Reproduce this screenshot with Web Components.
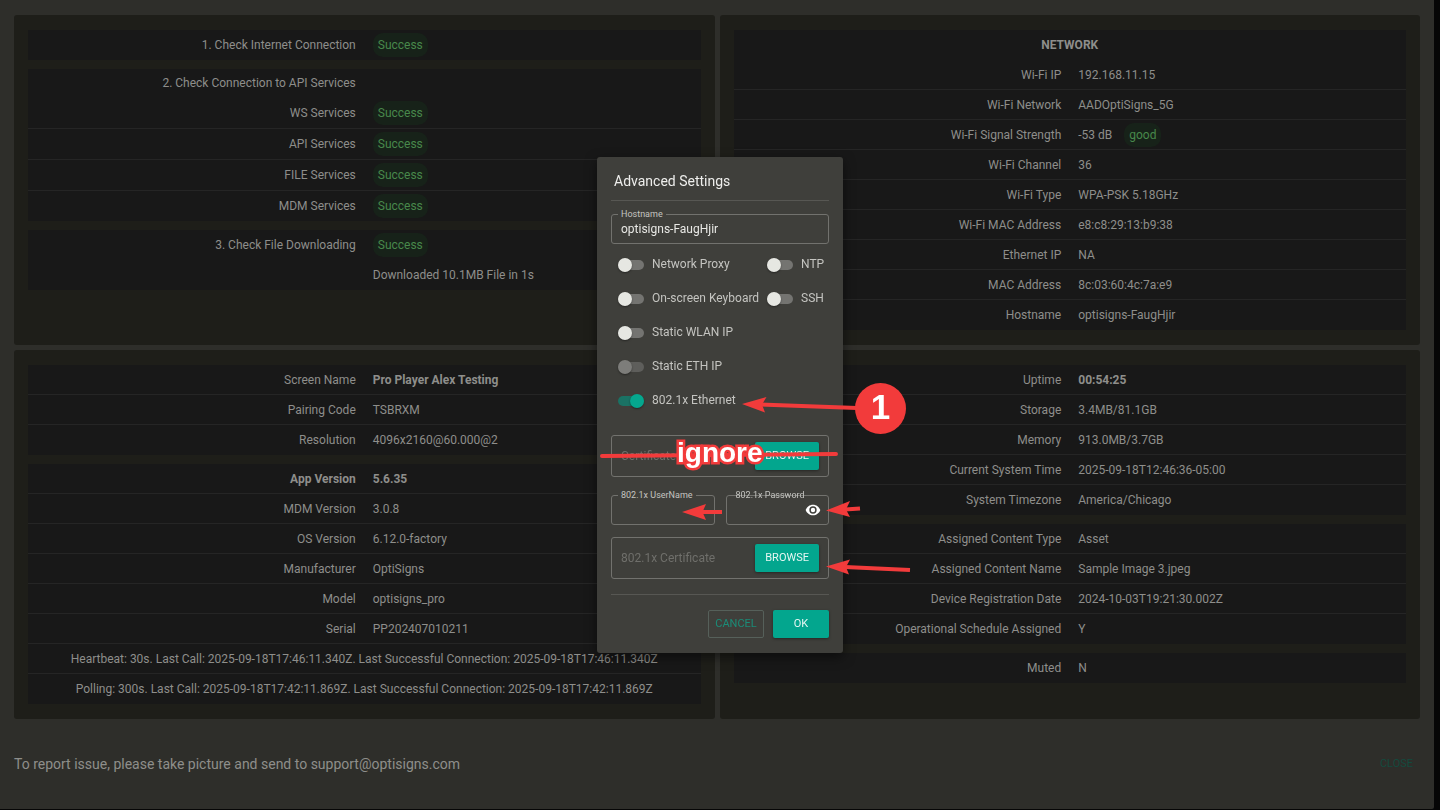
<!DOCTYPE html>
<html lang="en">
<head>
<meta charset="utf-8">
<title>Device status</title>
<style>
  body {
    margin: 0;
    background: #060606;
    color: #8e8e8b;
    font: 12px/16px Roboto, "Liberation Sans", sans-serif;
  }
</style>
</head>
<body>

<status-page>
  <info-panel>
    <info-group>
      <info-row label="1. Check Internet Connection"><status-pill>Success</status-pill></info-row>
    </info-group>
    <info-group>
      <info-row class="head" label="2. Check Connection to API Services"></info-row>
      <info-row class="service" label="WS Services"><status-pill>Success</status-pill></info-row>
      <info-row class="service" label="API Services"><status-pill>Success</status-pill></info-row>
      <info-row class="service" label="FILE Services"><status-pill>Success</status-pill></info-row>
      <info-row label="MDM Services"><status-pill>Success</status-pill></info-row>
    </info-group>
    <info-group>
      <info-row class="plain" label="3. Check File Downloading"><status-pill>Success</status-pill></info-row>
      <info-row>Downloaded 10.1MB File in 1s</info-row>
    </info-group>
  </info-panel>

  <info-panel>
    <info-group>
      <info-note class="title">NETWORK</info-note>
      <info-row label="Wi-Fi IP">192.168.11.15</info-row>
      <info-row label="Wi-Fi Network">AADOptiSigns_5G</info-row>
      <info-row label="Wi-Fi Signal Strength"><span>-53 dB</span><status-pill>good</status-pill></info-row>
      <info-row label="Wi-Fi Channel">36</info-row>
      <info-row label="Wi-Fi Type">WPA-PSK 5.18GHz</info-row>
      <info-row label="Wi-Fi MAC Address">e8:c8:29:13:b9:38</info-row>
      <info-row label="Ethernet IP">NA</info-row>
      <info-row label="MAC Address">8c:03:60:4c:7a:e9</info-row>
      <info-row label="Hostname">optisigns-FaugHjir</info-row>
    </info-group>
  </info-panel>

  <info-panel>
    <info-group>
      <info-row label="Screen Name"><b>Pro Player Alex Testing</b></info-row>
      <info-row label="Pairing Code">TSBRXM</info-row>
      <info-row label="Resolution">4096x2160@60.000@2</info-row>
    </info-group>
    <info-group>
      <info-row class="strong" label="App Version">5.6.35</info-row>
      <info-row label="MDM Version">3.0.8</info-row>
      <info-row label="OS Version">6.12.0-factory</info-row>
      <info-row label="Manufacturer">OptiSigns</info-row>
      <info-row label="Model">optisigns_pro</info-row>
      <info-row label="Serial">PP202407010211</info-row>
      <info-note>Heartbeat: 30s. Last Call: 2025-09-18T17:46:11.340Z. Last Successful Connection: 2025-09-18T17:46:11.340Z</info-note>
      <info-note>Polling: 300s. Last Call: 2025-09-18T17:42:11.869Z. Last Successful Connection: 2025-09-18T17:42:11.869Z</info-note>
    </info-group>
  </info-panel>

  <info-panel>
    <info-group>
      <info-row label="Uptime"><b>00:54:25</b></info-row>
      <info-row label="Storage">3.4MB/81.1GB</info-row>
      <info-row label="Memory">913.0MB/3.7GB</info-row>
      <info-row label="Current System Time">2025-09-18T12:46:36-05:00</info-row>
      <info-row label="System Timezone">America/Chicago</info-row>
    </info-group>
    <info-group>
      <info-row label="Assigned Content Type">Asset</info-row>
      <info-row label="Assigned Content Name">Sample Image 3.jpeg</info-row>
      <info-row label="Device Registration Date">2024-10-03T19:21:30.002Z</info-row>
      <info-row label="Operational Schedule Assigned">Y</info-row>
    </info-group>
    <info-group>
      <info-row label="Muted">N</info-row>
    </info-group>
  </info-panel>

  <span slot="footer">To report issue, please take picture and send to support@optisigns.com</span>
</status-page>

<settings-dialog heading="Advanced Settings">
  <text-field label="Hostname" value="optisigns-FaugHjir"></text-field>
  <switch-grid>
    <toggle-switch label="Network Proxy"></toggle-switch>
    <toggle-switch label="NTP"></toggle-switch>
    <toggle-switch label="On-screen Keyboard"></toggle-switch>
    <toggle-switch label="SSH"></toggle-switch>
    <toggle-switch class="wide" label="Static WLAN IP"></toggle-switch>
    <toggle-switch class="wide" label="Static ETH IP" disabled></toggle-switch>
    <toggle-switch class="wide" label="802.1x Ethernet" checked></toggle-switch>
  </switch-grid>
  <file-field label="Certificate"></file-field>
  <field-pair>
    <text-field label="802.1x UserName"></text-field>
    <text-field label="802.1x Password" type="password"></text-field>
  </field-pair>
  <file-field label="802.1x Certificate"></file-field>
  <md-button slot="actions" kind="outlined">CANCEL</md-button>
  <md-button slot="actions">OK</md-button>
  <callout-marks slot="marks"></callout-marks>
</settings-dialog>

<script>
// attaches an open shadow root with the given markup
function render(el, html) {
  el.attachShadow({ mode: 'open' });
  el.shadowRoot.innerHTML = html;
  return el.shadowRoot;
}

class StatusPage extends HTMLElement {
  constructor() {
    super();
    render(this, `
      <style>
        :host {
          display: flex;
          flex-direction: column;
          box-sizing: border-box;
          min-height: calc(100vh - 1px);
          margin-right: 6px;
          padding: 15px 14px 0;
          background: #2e2e2a;
          border-radius: 0 0 2px 0;
        }
        main {
          display: grid;
          grid-template-columns: 1fr 1fr;
          gap: 5px;
        }
        footer {
          display: flex;
          flex: 1;
          align-items: center;
          justify-content: space-between;
          font-size: 14px;
        }
        md-button { margin-right: 7px; }
      </style>
      <main><slot></slot></main>
      <footer>
        <slot name="footer"></slot>
        <md-button kind="faint">CLOSE</md-button>
      </footer>
    `);
  }
}

class InfoPanel extends HTMLElement {
  constructor() {
    super();
    render(this, `
      <style>
        :host {
          display: flex;
          flex-direction: column;
          gap: 9px;
          min-width: 0;
          padding: 15px 14px;
          background: #1e1e19;
          border-radius: 3px;
        }
      </style>
      <slot></slot>
    `);
  }
}

class InfoGroup extends HTMLElement {
  constructor() {
    super();
    render(this, `
      <style>
        :host { display: block; background: #181818; }
        ::slotted(*) { border-bottom: 1px solid #252525; }
        ::slotted(.head), ::slotted(.title), ::slotted(.plain), ::slotted(:last-child) {
          border-bottom-color: transparent;
        }
      </style>
      <slot></slot>
    `);
  }
}

class InfoRow extends HTMLElement {
  constructor() {
    super();
    const root = render(this, `
      <style>
        :host {
          display: grid;
          grid-template-columns: 1fr 1fr;
          gap: 17px;
          align-items: center;
          box-sizing: border-box;
          height: 30px;
        }
        :host(.service) { height: 31px; }
        :host(.head) { height: 29px; }
        :host(.strong) { font-weight: bold; }
        .label { text-align: right; }
        .value { display: flex; align-items: center; gap: 12px; }
      </style>
      <div class="label"></div>
      <div class="value"><slot></slot></div>
    `);
    root.querySelector('.label').textContent = this.getAttribute('label') || '';
  }
}

class InfoNote extends HTMLElement {
  constructor() {
    super();
    render(this, `
      <style>
        :host {
          display: flex;
          align-items: center;
          justify-content: center;
          box-sizing: border-box;
          height: 30px;
          white-space: nowrap;
        }
        :host(.title) { font-weight: bold; }
      </style>
      <slot></slot>
    `);
  }
}

class StatusPill extends HTMLElement {
  constructor() {
    super();
    render(this, `
      <style>
        :host {
          display: block;
          padding: 4px 5px;
          border-radius: 10px;
          background: #172219;
          color: #48884b;
        }
      </style>
      <slot></slot>
    `);
  }
}

class MdButton extends HTMLElement {
  constructor() {
    super();
    render(this, `
      <style>
        :host { display: block; }
        button {
          box-sizing: border-box;
          width: 100%;
          min-width: 56px;
          height: 28px;
          padding: 0 10px;
          border: 0;
          border-radius: 2px;
          background: #03a68e;
          color: #e4f6f2;
          font: 11px/16px Roboto, "Liberation Sans", sans-serif;
          box-shadow: 0 1px 3px rgba(0, 0, 0, .4);
        }
        :host([kind=outlined]) button {
          padding: 0 6px;
          border: 1px solid #56605a;
          background: none;
          color: #1b8c78;
          box-shadow: none;
        }
        :host([kind=faint]) button {
          min-width: 0;
          padding: 0;
          background: none;
          color: #144a3e;
          box-shadow: none;
        }
      </style>
      <button type="button"><slot></slot></button>
    `);
  }
}

class SettingsDialog extends HTMLElement {
  constructor() {
    super();
    const root = render(this, `
      <style>
        :host {
          position: fixed;
          inset: 0;
          display: grid;
          place-items: center;
        }
        section {
          position: relative;
          box-sizing: border-box;
          width: 246px;
          padding: 0 14px 15px;
          border-radius: 3px;
          background: #3f3f3b;
          box-shadow: 0 4px 12px rgba(0, 0, 0, .5);
          color: #c4c4c0;
        }
        h1 {
          margin: 0;
          padding: 14px 3px 9px;
          border-bottom: 1px solid #575753;
          color: #eeeeec;
          font-size: 14px;
          line-height: 20px;
          font-weight: normal;
        }
        .body {
          display: flex;
          flex-direction: column;
          padding: 13px 0 15px;
        }
        .actions {
          display: flex;
          justify-content: flex-end;
          gap: 9px;
          padding-top: 15px;
          border-top: 1px solid #575753;
        }
      </style>
      <section role="dialog" aria-labelledby="heading">
        <h1 id="heading"></h1>
        <div class="body"><slot></slot></div>
        <div class="actions"><slot name="actions"></slot></div>
        <slot name="marks"></slot>
      </section>
    `);
    root.querySelector('h1').textContent = this.getAttribute('heading');
  }
}

class TextField extends HTMLElement {
  constructor() {
    super();
    const password = this.getAttribute('type') === 'password';
    const root = render(this, `
      <style>
        :host {
          position: relative;
          display: flex;
          align-items: center;
          box-sizing: border-box;
          min-width: 0;
          height: 30px;
          padding: 0 7px 0 9px;
          border: 1px solid #72726e;
          border-radius: 3px;
        }
        label {
          position: absolute;
          top: -6px;
          left: 6px;
          padding: 0 3px;
          background: #3f3f3b;
          font-size: 9px;
          line-height: 10px;
          white-space: nowrap;
        }
        :host([type=password]) label { background: none; }
        input {
          flex: 1;
          min-width: 0;
          padding: 0;
          border: 0;
          outline: 0;
          background: none;
          color: #e8e8e5;
          font: inherit;
        }
        button {
          display: flex;
          padding: 0;
          border: 0;
          background: none;
        }
      </style>
      <label for="field"></label>
      <input id="field" autocomplete="off">
      ${password ? `
        <button type="button" aria-label="Show password">
          <svg width="16" height="16" viewBox="0 0 24 24" fill="#fff">
            <path d="M12 4C7 4 2.700 7.300 1 12c1.700 4.700 6 8 11 8s9.300-3.300 11-8c-1.700-4.700-6-8-11-8zm0 13.500a5.500 5.500 0 1 1 0-11 5.500 5.500 0 0 1 0 11zm0-8.800a3.300 3.300 0 1 0 0 6.600 3.300 3.300 0 0 0 0-6.600z"/>
          </svg>
        </button>` : ''}
    `);
    const input = root.querySelector('input');
    input.type = password ? 'password' : 'text';
    input.value = this.getAttribute('value') || '';
    root.querySelector('label').textContent = this.getAttribute('label');
  }
}

class FieldPair extends HTMLElement {
  constructor() {
    super();
    render(this, `
      <style>
        :host {
          display: grid;
          grid-template-columns: 1fr 1fr;
          gap: 11px;
          margin: 18px 0 12px;
        }
      </style>
      <slot></slot>
    `);
  }
}

class SwitchGrid extends HTMLElement {
  constructor() {
    super();
    render(this, `
      <style>
        :host {
          display: grid;
          grid-template-columns: 149px 1fr;
          grid-auto-rows: 34px;
          align-items: center;
          margin: 3px 0 18px;
          padding-left: 7px;
        }
        ::slotted(.wide) { grid-column: 1 / -1; }
      </style>
      <slot></slot>
    `);
  }
}

class ToggleSwitch extends HTMLElement {
  constructor() {
    super();
    const root = render(this, `
      <style>
        :host { display: block; }
        label {
          display: flex;
          align-items: center;
          gap: 8px;
          white-space: nowrap;
        }
        input {
          appearance: none;
          display: flex;
          align-items: center;
          width: 26px;
          height: 10px;
          margin: 1px 0 0;
          border-radius: 5px;
          background: #747471;
        }
        input::before {
          content: "";
          width: 14px;
          height: 14px;
          flex: none;
          border-radius: 50%;
          background: #e6e7e2;
          box-shadow: 0 1px 2px rgba(0, 0, 0, .4);
        }
        input:disabled { background: #5e5e5b; }
        input:disabled::before { background: #7d7d7a; }
        input:checked { justify-content: flex-end; background: #1a7264; }
        input:checked::before { background: #05a78e; }
      </style>
      <label><input type="checkbox" role="switch"><span></span></label>
    `);
    const input = root.querySelector('input');
    input.checked = this.hasAttribute('checked');
    input.disabled = this.hasAttribute('disabled');
    root.querySelector('span').textContent = this.getAttribute('label');
  }
}

class FileField extends HTMLElement {
  constructor() {
    super();
    const root = render(this, `
      <style>
        :host {
          display: flex;
          align-items: center;
          justify-content: space-between;
          box-sizing: border-box;
          height: 42px;
          padding: 0 9px;
          border: 1px solid #72726e;
          border-radius: 3px;
          color: #6f6f6b;
        }
      </style>
      <label for="file"></label>
      <input id="file" type="file" hidden>
      <md-button>BROWSE</md-button>
    `);
    root.querySelector('label').textContent = this.getAttribute('label');
    root.querySelector('md-button').addEventListener('click', () => {
      root.querySelector('input').click();
    });
  }
}

// red arrows and notes drawn over the dialog, in the dialog's own coordinates
class CalloutMarks extends HTMLElement {
  constructor() {
    super();
    render(this, `
      <style>
        :host {
          position: absolute;
          inset: 0;
          pointer-events: none;
          color: #fff;
          font-family: "Liberation Sans", Arial, sans-serif;
          font-weight: bold;
        }
        svg { position: absolute; overflow: visible; }
        .badge {
          position: absolute;
          left: 258px;
          top: 226px;
          width: 51px;
          padding-bottom: 4px;
          border-radius: 50%;
          background: #f23b3b;
          text-align: center;
          font-size: 35px;
          line-height: 47px;
        }
        .word {
          position: absolute;
          left: 80px;
          top: 280px;
          font-size: 28px;
          line-height: 32px;
          -webkit-text-stroke: 5px #f23b3b;
          paint-order: stroke fill;
        }
      </style>
      <svg width="246" height="496" viewBox="0 0 246 496" fill="#f23b3b" stroke="#f23b3b">
        <g fill="none" stroke-width="4">
          <path d="M5 299 239 297" stroke-linecap="round"/>
          <path d="M163 247.500 260 251"/>
          <path d="M103 355H125"/>
          <path d="M248 352.500 263 351.500"/>
          <path d="M248 410 313 413"/>
        </g>
        <g stroke="none">
          <path d="M145 247 169.500 240 165 247.500 168 255.500z"/>
          <path d="M85 355 109 347 105.500 355 109 363z"/>
          <path d="M229 353.500 253 344 249 352.500 253 360z"/>
          <path d="M229 409.500 253 402.500 249 410 252 417.500z"/>
        </g>
      </svg>
      <span class="badge">1</span>
      <span class="word">ignore</span>
    `);
  }
}

customElements.define('md-button', MdButton);
customElements.define('status-page', StatusPage);
customElements.define('info-panel', InfoPanel);
customElements.define('info-group', InfoGroup);
customElements.define('info-row', InfoRow);
customElements.define('info-note', InfoNote);
customElements.define('status-pill', StatusPill);
customElements.define('settings-dialog', SettingsDialog);
customElements.define('text-field', TextField);
customElements.define('field-pair', FieldPair);
customElements.define('switch-grid', SwitchGrid);
customElements.define('toggle-switch', ToggleSwitch);
customElements.define('file-field', FileField);
customElements.define('callout-marks', CalloutMarks);
</script>
</body>
</html>
